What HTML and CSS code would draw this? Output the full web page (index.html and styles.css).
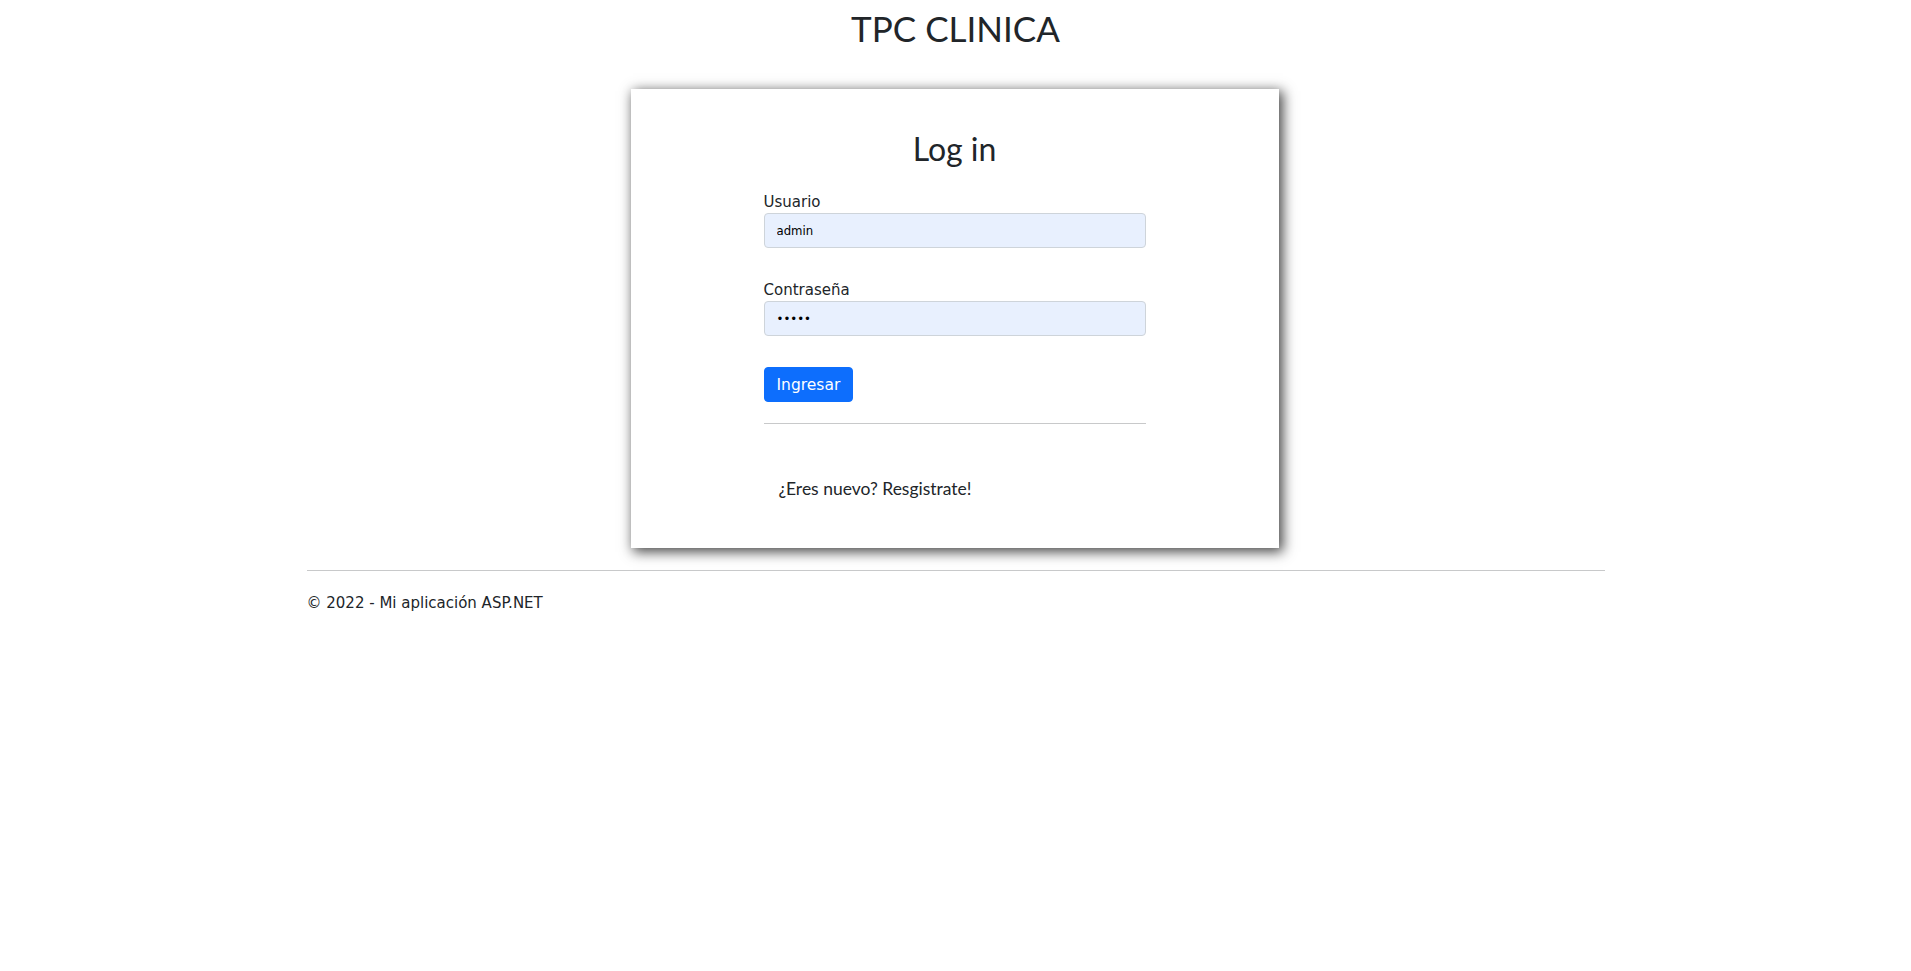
FILE: index.html
```html
<!DOCTYPE html>
<html lang="es">
<head>
<meta charset="utf-8">
<title>Log in - TPC CLINICA</title>
<link rel="stylesheet" href="styles.css">
</head>
<body>
<header class="site-header">
  <h1 class="brand">TPC CLINICA</h1>
</header>
<main class="container">
  <section class="login-card">
    <form class="login-form">
      <h2 class="login-title">Log in</h2>
      <div class="field">
        <label class="field-label" for="usuario">Usuario</label>
        <input class="field-input" id="usuario" type="text" value="admin">
      </div>
      <div class="field">
        <label class="field-label" for="clave">Contraseña</label>
        <input class="field-input" id="clave" type="password" value="admin">
      </div>
      <button class="btn-primary" type="button">Ingresar</button>
      <hr class="divider">
      <p class="register">¿Eres nuevo? Resgistrate!</p>
    </form>
  </section>
  <hr class="footer-rule">
  <footer class="site-footer">
    <p>© 2022 - Mi aplicación ASP.NET</p>
  </footer>
</main>
</body>
</html>
```
FILE: styles.css
```css
* { box-sizing: border-box; }

body {
  margin: 0;
  background: #fff;
  color: #212529;
  font-family: "DejaVu Sans", Verdana, sans-serif;
}

.site-header {
  padding: 4px 0 37px;
}

.brand {
  margin: 0;
  text-align: center;
  font-family: Lato, "Open Sans", sans-serif;
  font-weight: 400;
  font-size: 35px;
  line-height: 48px;
  color: #212529;
}

.container {
  width: 1298px;
  margin: 0 auto;
}

.login-card {
  width: 648px;
  margin: 0 0 0 calc(50% - 325px);
  background: #fff;
  padding: 41px 0 47px;
  box-shadow: 3px 3px 12px 1px rgba(0, 0, 0, 0.72);
}

.login-form {
  width: 382px;
  margin: 0 auto;
}

.login-title {
  margin: 0 0 22px;
  text-align: center;
  font-family: Lato, sans-serif;
  font-weight: 400;
  font-size: 32px;
  line-height: 38px;
}

.field {
  margin-bottom: 30px;
}

.field + .field {
  margin-bottom: 31px;
}

.field-label {
  display: block;
  padding-top: 1px;
  font-size: 15px;
  line-height: 22px;
}

.field-input {
  display: block;
  width: 100%;
  height: 35px;
  padding: 0 12px;
  border: 1px solid #ced4da;
  border-radius: 4px;
  background: #e8f0fe;
  color: #000;
  font-family: "Liberation Sans Narrow", "DejaVu Sans Condensed", sans-serif;
  font-size: 13px;
  outline: none;
}

.btn-primary {
  display: block;
  height: 35px;
  padding: 0 12px;
  border: 1px solid #0d6efd;
  border-radius: 4px;
  background: #0d6efd;
  color: #fff;
  font-family: "DejaVu Sans", sans-serif;
  font-size: 15.5px;
  line-height: 22px;
}

.divider {
  margin: 21px 0 0;
  border: 0;
  border-top: 1px solid #c8c9ca;
}

.register {
  margin: 53px 0 0;
  padding-left: 15px;
  font-family: Lato, sans-serif;
  font-size: 17.5px;
  line-height: 24px;
}

.footer-rule {
  margin: 22px 0 0;
  border: 0;
  border-top: 1px solid #c8c9ca;
}

.site-footer p {
  margin: 21px 0 0;
  font-size: 15px;
  line-height: 22px;
}
```
